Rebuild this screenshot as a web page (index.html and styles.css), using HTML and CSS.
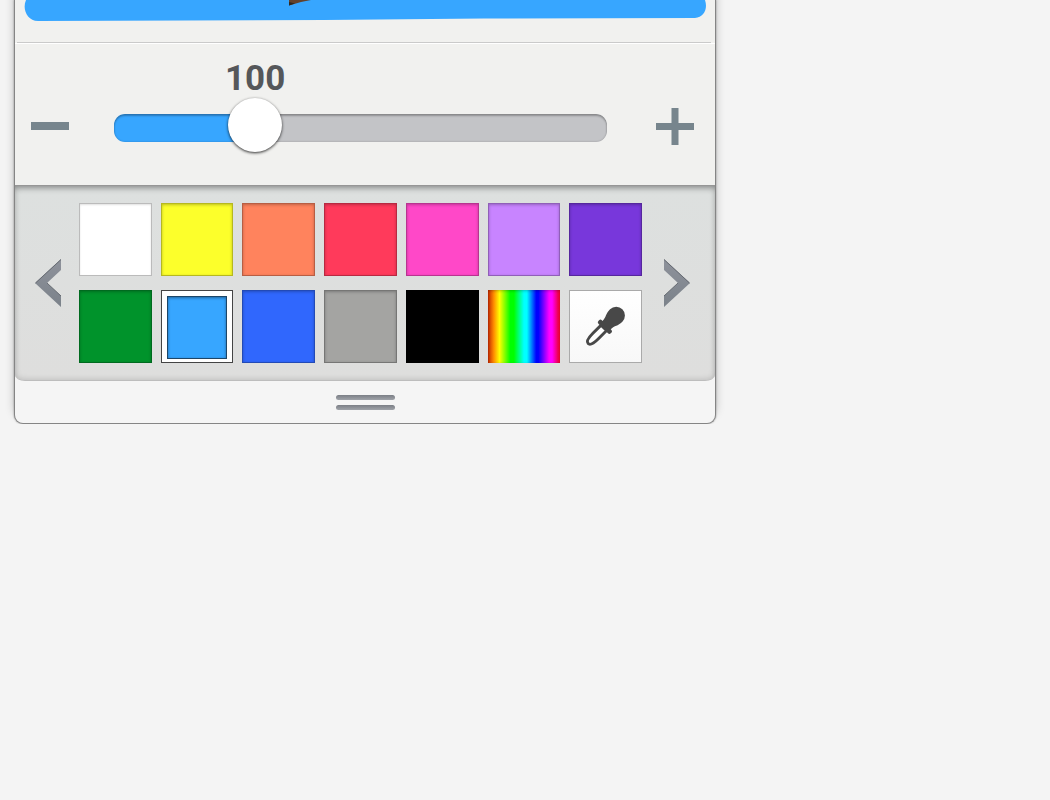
FILE: index.html
```html
<!DOCTYPE html>
<html lang="en">
<head>
    <meta charset="UTF-8">
    <meta name="viewport" content="width=device-width, initial-scale=1.0">
    <title>Pen settings</title>
    <link rel="stylesheet" href="styles.css">
</head>
<body>
    <main class="panel">
        <div class="preview">
            <svg viewBox="0 0 682 42" aria-hidden="true">
                <path d="M2 0C-2 9 3 21 14 21L300 20L460 18.500L671 18C680 17 684 9 681 0Z" fill="#37a6ff"/>
                <path d="M265 0H287L277 2L265 5.500Z" fill="#63412c"/>
                <path d="M265 5.500V2L271 3.500Z" fill="#302820"/>
            </svg>
        </div>

        <div class="size">
            <button class="step" aria-label="Thinner">
                <svg viewBox="0 0 38 38"><path d="M0 19H38" stroke-width="8"/></svg>
            </button>
            <div class="slider" style="--pos: 0.26">
                <output class="value" for="penSize">100</output>
                <input type="range" id="penSize" min="0" max="385" value="100" aria-label="Pen size">
            </div>
            <button class="step" aria-label="Thicker">
                <svg viewBox="0 0 38 38"><path d="M0 19.500H38M19 1V38" stroke-width="7"/></svg>
            </button>
        </div>

        <div class="palette">
            <button class="arrow" aria-label="Previous colors">
                <svg viewBox="0 0 26 48">
                    <defs>
                        <linearGradient id="arrowFill" x1="0" y1="0" x2="0" y2="1">
                            <stop offset="0" stop-color="#8e929b"/>
                            <stop offset="1" stop-color="#7b828a"/>
                        </linearGradient>
                    </defs>
                    <path d="M26 0V11L12 24L26 37V48L0 24Z" fill="url(#arrowFill)"/>
                    <path d="M26 .5L.5 24M12 24L26 37" fill="none" stroke="#666b72"/>
                </svg>
            </button>
            <div class="swatches">
                <button class="swatch white" aria-label="White"></button>
                <button class="swatch yellow" aria-label="Yellow"></button>
                <button class="swatch orange" aria-label="Orange"></button>
                <button class="swatch red" aria-label="Red"></button>
                <button class="swatch pink" aria-label="Pink"></button>
                <button class="swatch lilac" aria-label="Lilac"></button>
                <button class="swatch purple" aria-label="Purple"></button>
                <button class="swatch green" aria-label="Green"></button>
                <button class="swatch sky selected" aria-label="Sky blue" aria-pressed="true"></button>
                <button class="swatch blue" aria-label="Blue"></button>
                <button class="swatch gray" aria-label="Gray"></button>
                <button class="swatch black" aria-label="Black"></button>
                <button class="swatch rainbow" aria-label="Custom color"></button>
                <button class="swatch picker" aria-label="Pick color">
                    <svg viewBox="0 0 73 73">
                        <g transform="translate(18 55) rotate(-45)">
                            <path d="M1 0C1-3 6-4 12-4H24V4H12C6 4 1 3 1 0Z" fill="#fff" stroke="#484848" stroke-width="3" stroke-linejoin="round"/>
                            <path d="M23-7Q23-9 25-9H26Q28-9 28-7V-6C34-6 35-9 42-9A9 9 0 0 1 42 9C35 9 34 6 28 6V7Q28 9 26 9H25Q23 9 23 7Z" fill="#484848"/>
                        </g>
                    </svg>
                </button>
            </div>
            <button class="arrow" aria-label="Next colors">
                <svg viewBox="0 0 26 48">
                    <path d="M0 0V11L14 24L0 37V48L26 24Z" fill="url(#arrowFill)"/>
                    <path d="M0 .5L25.500 24M14 24L0 37" fill="none" stroke="#666b72"/>
                </svg>
            </button>
        </div>

        <button class="handle" aria-label="Resize panel">
            <span class="grip"></span>
            <span class="grip"></span>
        </button>
    </main>
    <script>
        const slider = document.querySelector('.slider');
        const penSize = document.getElementById('penSize');
        const value = document.querySelector('.value');

        penSize.addEventListener('input', () => {
            value.textContent = penSize.value;
            slider.style.setProperty('--pos', penSize.value / penSize.max);
        });
    </script>
</body>
</html>
```
FILE: styles.css
```css
* {
    box-sizing: border-box;
}

body {
    margin: 0;
    background-color: #f4f4f4;
    font-family: Roboto, Arial, sans-serif;
}

button {
    padding: 0;
    border: none;
    background: none;
    cursor: pointer;
}

svg {
    display: block;
    width: 100%;
}

.panel {
    max-width: 702px;
    margin: 0 14px;
    border: 1px solid #858585;
    border-top: none;
    border-radius: 0 0 9px 9px;
    background-color: #f5f5f5;
    box-shadow: 0 -8px 10px rgba(0, 0, 0, 0.22), 0 0 2px rgba(0, 0, 0, 0.4);
}

.preview {
    margin: 0 4px 0 2px;
    padding: 0 5px 0 7px;
    border-bottom: 1px solid #cacaca;
}

/* Pen size */
.size {
    display: grid;
    grid-template-columns: 38px 1fr 38px;
    padding: 15px 21px 28px 16px;
    border-top: 1px solid #fff;
    align-items: end;
}

.preview,
.size {
    background-color: #f1f1ef;
}

.preview {
    box-shadow: -2px 0 #f1f1ef, 4px 0 #f1f1ef;
}

.step {
    height: 38px;
    margin-bottom: 12px;
}

.step path {
    stroke: #77858d;
}

.slider {
    margin: 0 49px 0 45px;
}

.value {
    display: block;
    width: 80px;
    margin-left: calc((100% - 54px) * var(--pos) - 13px);
    color: #55575a;
    font-size: 35px;
    font-weight: bold;
    line-height: 40px;
    text-align: center;
}

.slider input {
    display: block;
    width: 100%;
    height: 58px;
    margin: 0;
    background: none;
    -webkit-appearance: none;
    appearance: none;
}

.slider input::-webkit-slider-runnable-track {
    height: 28px;
    border-radius: 11px;
    background: linear-gradient(#37a6ff, #37a6ff) no-repeat #c3c4c7;
    background-size: calc((100% - 54px) * var(--pos) + 27px) 100%;
    box-shadow: inset 0 2px 2px rgba(0, 0, 0, 0.25), inset 0 0 2px rgba(0, 0, 0, 0.25);
}

.slider input::-webkit-slider-thumb {
    width: 54px;
    height: 54px;
    margin-top: -16px;
    border-radius: 50%;
    background-color: #fff;
    box-shadow: 0 1px 3px rgba(0, 0, 0, 0.8);
    -webkit-appearance: none;
}

/* Colors */
.palette {
    display: grid;
    grid-template-columns: 26px 1fr 26px;
    align-items: center;
    padding: 17px 25px 17px 20px;
    border-top: 1px solid #969696;
    border-bottom: 1px solid #bdbdbd;
    border-radius: 0 0 10px 10px / 0 0 6px 6px;
    background: linear-gradient(#dde0df, #dededd);
    box-shadow: inset 0 5px 6px -3px rgba(0, 0, 0, 0.3), inset 0 0 6px rgba(0, 0, 0, 0.18);
}

.swatches {
    display: grid;
    grid-template-columns: repeat(7, 1fr);
    gap: 14px 9px;
    margin: 0 22px 0 18px;
}

.swatch {
    height: 73px;
    border: 1px solid rgba(0, 0, 0, 0.28);
    box-shadow: inset 0 1px 3px rgba(0, 0, 0, 0.25);
}

.white { background-color: #fff; }
.yellow { background-color: #fcff2b; }
.orange { background-color: #ff835d; }
.red { background-color: #ff3a5b; }
.pink { background-color: #ff48c8; }
.lilac { background-color: #c884ff; }
.purple { background-color: #7837db; }
.green { background-color: #00932b; }
.sky { background-color: #37a6ff; }
.blue { background-color: #3067fd; }
.gray { background-color: #a4a4a2; }
.black { background-color: #000; }

.white {
    border-color: #bbb;
    box-shadow: inset 0 1px 2px rgba(0, 0, 0, 0.12);
}

.rainbow {
    border: none;
    background: linear-gradient(to right, #c42800, #ff8c00 8%, #ff0 16%, #0f0 31%, #0f0 36%, #0ff 50%, #0ff 54%, #00f 67%, #00f 70%, #f0f 85%, #f0f 89%, #f00055 97%, #f03);
}

.selected {
    padding: 5px;
    border: 1px solid #444;
    background-color: #fff;
    box-shadow: none;
}

.selected::before {
    content: "";
    display: block;
    height: 61px;
    border: 1px solid #1d4668;
    background-color: #37a6ff;
    box-shadow: inset 0 1px 3px rgba(0, 0, 0, 0.4);
}

.picker {
    border-color: #aaa;
    background: linear-gradient(#fff, #f8f8f8);
    box-shadow: none;
}

.handle {
    display: grid;
    width: 100%;
    height: 42px;
    gap: 5px;
    align-content: center;
    justify-content: center;
}

.grip {
    width: 59px;
    height: 5px;
    border-radius: 3px;
    background: linear-gradient(#7b7f86, #a0a3a9);
}
```
